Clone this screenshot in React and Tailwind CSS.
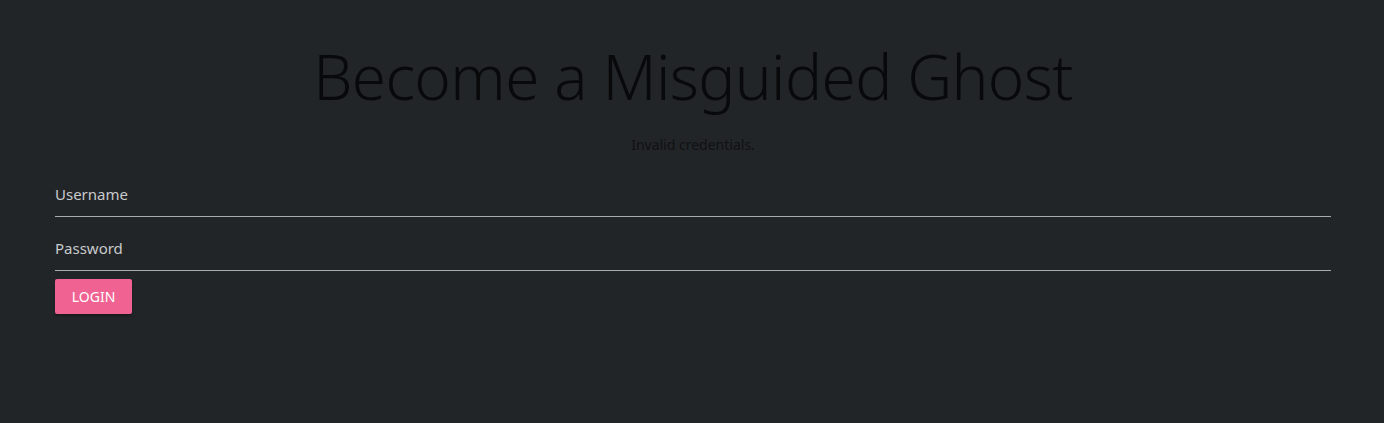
export default function App() {
  return (
    <div className="min-h-[423px] w-full bg-[#222528]" style={{ fontFamily: '"Noto Sans", "Open Sans", sans-serif' }}>
      <div className="pl-[55px] pr-[53px] pt-[38px]">
        <h1 className="text-center text-[62px] leading-[76px] font-light text-[#08090a] tracking-[-0.6px]">Become a Misguided Ghost</h1>
        <p className="mt-[21px] text-center text-[14px] leading-[20px] text-[#0f1112]">Invalid credentials.</p>
        <div className="mt-[20px]">
          <div className="border-b border-[#a9abad] pt-[7px] pb-[10px]">
            <input className="w-full bg-transparent text-[15px] leading-[22px] text-[#c8cacc] placeholder-[#c8cacc] outline-none" placeholder="Username" />
          </div>
          <div className="border-b border-[#a9abad] pt-[19px] pb-[10px]">
            <input type="password" className="w-full bg-transparent text-[15px] leading-[22px] text-[#c8cacc] placeholder-[#c8cacc] outline-none" placeholder="Password" />
          </div>
          <button className="mt-[8px] h-[35px] w-[77px] rounded-[2px] bg-[#f06292] text-[14px] text-white shadow-[0_2px_2px_rgba(0,0,0,0.3)]">LOGIN</button>
        </div>
      </div>
    </div>
  );
}
